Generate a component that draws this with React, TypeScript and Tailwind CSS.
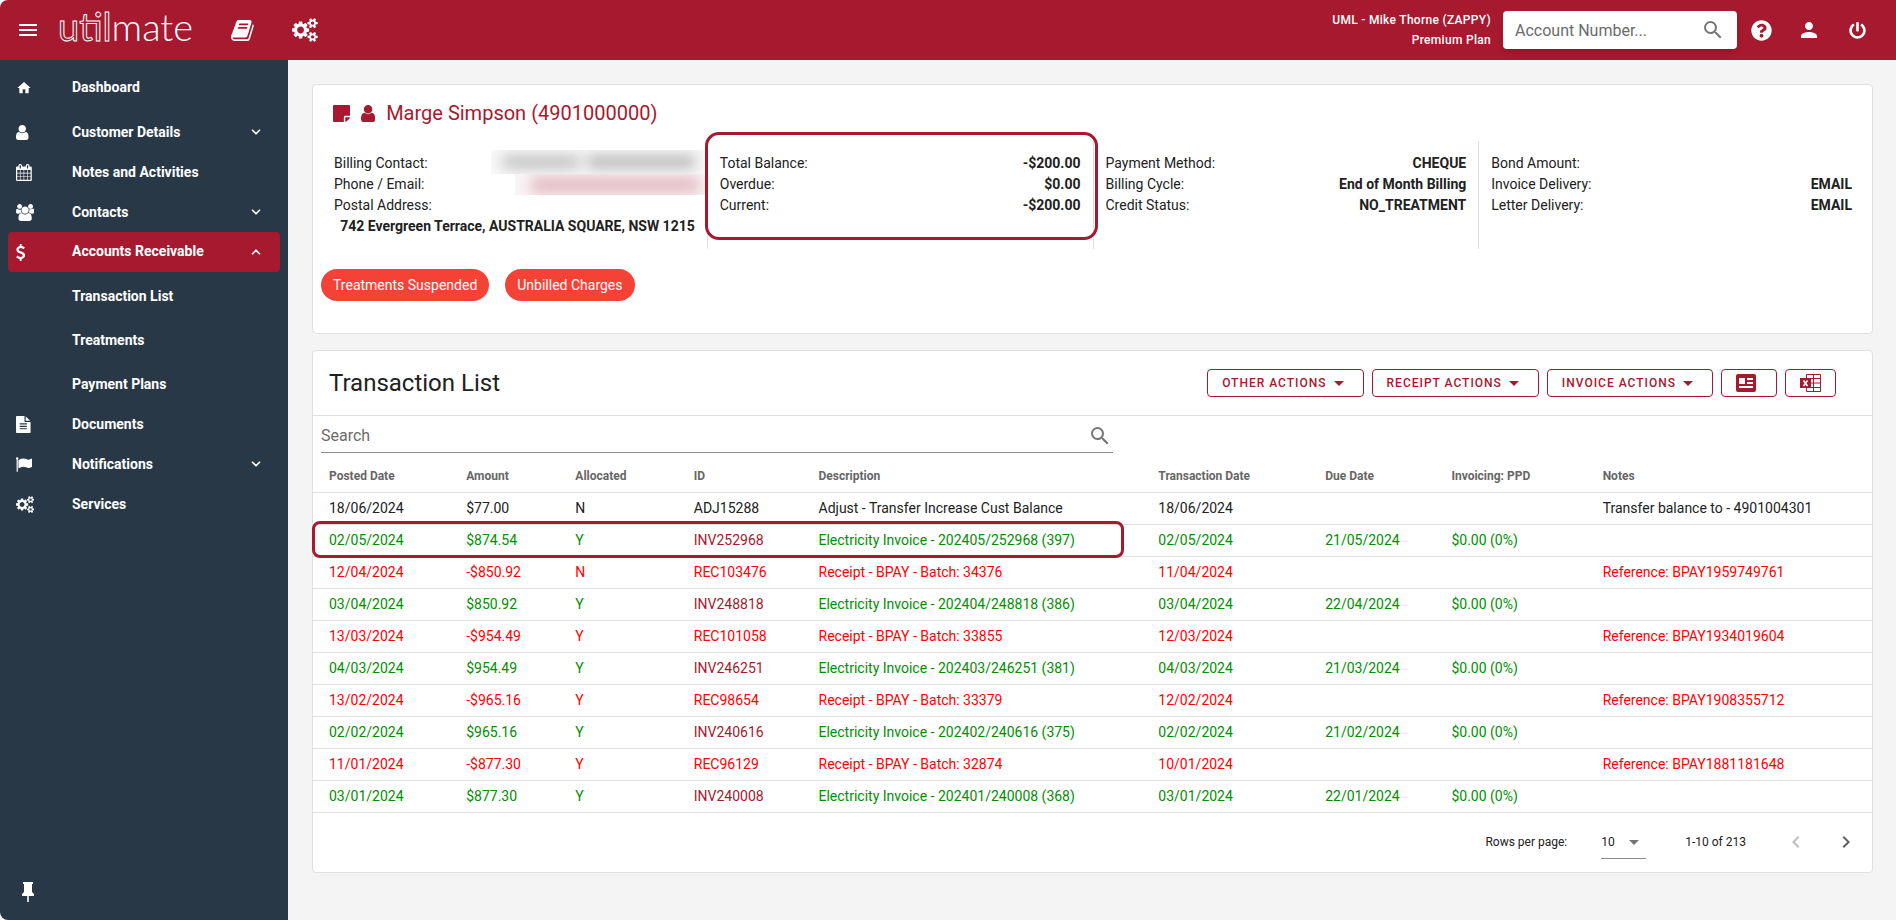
import type { ReactNode } from "react";
import { ChevronDown, ChevronUp } from "lucide-react";
import { FaPowerOff, FaQuestionCircle } from "react-icons/fa";
import { MdArrowDropDown, MdChevronLeft, MdChevronRight, MdHome, MdMenu, MdPerson, MdSearch } from "react-icons/md";

const glyphs = {
  user: {
    box: "256 128 1280 1536",
    d: "M1536 1399q0 109-62.5 187t-150.5 78h-854q-88 0-150.5-78t-62.5-187q0-85 8.5-160.5t31.5-152 58.5-131 94-89 134.5-34.5q131 128 313 128t313-128q76 0 134.5 34.5t94 89 58.5 131 31.5 152 8.5 160.5zm-256-887q0 159-112.5 271.5t-271.5 112.5-271.5-112.5-112.5-271.5 112.5-271.5 271.5-112.5 271.5 112.5 112.5 271.5z",
  },
  calendar: {
    box: "64 0 1664 1792",
    d: "M192 1664h288v-288h-288v288zm352 0h320v-288h-320v288zm-352-352h288v-320h-288v320zm352 0h320v-320h-320v320zm-352-384h288v-288h-288v288zm736 736h320v-288h-320v288zm-384-736h320v-288h-320v288zm768 736h288v-288h-288v288zm-384-352h320v-320h-320v320zm-352-864v-288q0-13-9.5-22.5t-22.5-9.5h-64q-13 0-22.5 9.5t-9.5 22.5v288q0 13 9.5 22.5t22.5 9.5h64q13 0 22.5-9.5t9.5-22.5zm736 864h288v-320h-288v320zm-384-384h320v-288h-320v288zm384 0h288v-288h-288v288zm32-480v-288q0-13-9.5-22.5t-22.5-9.5h-64q-13 0-22.5 9.5t-9.5 22.5v288q0 13 9.5 22.5t22.5 9.5h64q13 0 22.5-9.5t9.5-22.5zm384-64v1280q0 52-38 90t-90 38h-1408q-52 0-90-38t-38-90v-1280q0-52 38-90t90-38h128v-96q0-66 47-113t113-47h64q66 0 113 47t47 113v96h384v-96q0-66 47-113t113-47h64q66 0 113 47t47 113v96h128q52 0 90 38t38 90z",
  },
  users: {
    box: "64 0 1920 1792",
    d: "M657 896q-162 5-265 128h-134q-82 0-138-40.5t-56-118.5q0-353 124-353 6 0 43.5 21t97.5 42.5 119 21.5q67 0 133-23-5 37-5 66 0 159 93 293zm1071 637q0 120-73 189.5t-194 69.5h-874q-121 0-194-69.5t-73-189.5q0-53 3.5-103.5t14-109 26.5-108.5 43-97.5 62-81 85.5-53.5 111.5-20q10 0 43 21.5t73 48 107 48 135 21.5 135-21.5 107-48 73-48 43-21.5q61 0 111.5 20t85.5 53.5 62 81 43 97.5 26.5 108.5 14 109 3.5 103.5zm-1024-1277q0 106-75 181t-181 75-181-75-75-181 75-181 181-75 181 75 75 181zm704 384q0 159-112.5 271.5t-271.5 112.5-271.5-112.5-112.5-271.5 112.5-271.5 271.5-112.5 271.5 112.5 112.5 271.5zm576 225q0 78-56 118.5t-138 40.5h-134q-103-123-265-128 93-134 93-293 0-29-5-66 66 23 133 23 59 0 119-21.5t97.5-42.5 43.5-21q124 0 124 353zm-128-609q0 106-75 181t-181 75-181-75-75-181 75-181 181-75 181 75 75 181z",
  },
  dollar: {
    box: "410 0 960 1792",
    d: "M1362 1185q0 153-99.5 263.5t-258.5 136.5v175q0 14-9 23t-23 9h-135q-13 0-22.5-9.5t-9.5-22.5v-175q-66-9-127.5-31t-101.5-44.5-74-48-46.5-37.5-17.5-18q-17-21-2-41l103-135q7-10 23-12 15-2 24 9l2 2q113 99 243 125 37 8 74 8 81 0 142.5-43t61.5-122q0-28-15-53t-33.5-42-58.5-37.5-66-32-80-32.5q-39-16-61.5-25t-61.5-26.5-62.5-31-56.5-35.5-53.5-42.5-43.5-49-35.5-58-21-66.5-8.5-78q0-138 98-242t255-134v-180q0-13 9.5-22.5t22.5-9.5h135q14 0 23 9t9 23v176q57 6 110.5 23t87 33.5 63.5 37.5 39 29 15 14q17 18 5 38l-81 146q-8 15-23 16-14 3-27-7-3-3-14.5-12t-39-26.5-58.5-32-74.5-26-85.5-11.5q-95 0-155 43t-60 111q0 26 8.5 48t29.5 41.5 39.5 33 56 31 60.5 27 70 27.5q53 20 81 31.5t76 35 75.5 42.5 62 50 53 63.5 31.5 76.5 13 94z",
  },
  file: {
    box: "128 0 1536 1792",
    d: "M1596 476q14 14 28 36h-472v-472q22 14 36 28zm-476 164h544v1056q0 40-28 68t-68 28h-1344q-40 0-68-28t-28-68v-1600q0-40 28-68t68-28h800v544q0 40 28 68t68 28zm160 736v-64q0-14-9-23t-23-9h-704q-14 0-23 9t-9 23v64q0 14 9 23t23 9h704q14 0 23-9t9-23zm0-256v-64q0-14-9-23t-23-9h-704q-14 0-23 9t-9 23v64q0 14 9 23t23 9h704q14 0 23-9t9-23zm0-256v-64q0-14-9-23t-23-9h-704q-14 0-23 9t-9 23v64q0 14 9 23t23 9h704q14 0 23-9t9-23z",
  },
  flag: {
    box: "64 0 1728 1792",
    d: "M320 256q0 72-64 110v1266q0 13-9.5 22.5t-22.5 9.5h-64q-13 0-22.5-9.5t-9.5-22.5v-1266q-64-38-64-110 0-53 37.5-90.5t90.5-37.5 90.5 37.5 37.5 90.5zm1472 64v763q0 25-12.5 38.5t-39.5 27.5q-215 116-369 116-61 0-123.5-22t-108.5-48-115.5-48-142.5-22q-192 0-464 146-17 9-33 9-26 0-45-19t-19-45v-742q0-32 31-55 21-14 79-43 236-120 421-120 107 0 200 29t219 88q38 19 88 19 54 0 117.5-21t110-47 88-47 54.5-21q26 0 45 19t19 45z",
  },
  cogs: {
    box: "0 0 1920 1792",
    d: "M896 896q0-106-75-181t-181-75-181 75-75 181 75 181 181 75 181-75 75-181zm768 512q0-52-38-90t-90-38-90 38-38 90q0 53 37.5 90.5t90.5 37.5 90.5-37.5 37.5-90.5zm0-1024q0-52-38-90t-90-38-90 38-38 90q0 53 37.5 90.5t90.5 37.5 90.5-37.5 37.5-90.5zm-384 421v185q0 10-7 19.5t-16 10.5l-155 24q-11 35-32 76 34 48 90 115 7 11 7 20 0 12-7 19-23 30-82.5 89.5t-78.5 59.5q-11 0-21-7l-115-90q-37 19-77 31-11 108-23 155-7 24-30 24h-186q-11 0-20-7.5t-10-17.5l-23-153q-34-10-75-31l-118 89q-7 7-20 7-11 0-21-8-144-133-144-160 0-9 7-19 10-14 41-53t47-61q-23-44-35-82l-152-24q-10-1-17-9.5t-7-19.5v-185q0-10 7-19.5t16-10.5l155-24q11-35 32-76-34-48-90-115-7-11-7-20 0-12 7-20 22-30 82-89t79-59q11 0 21 7l115 90q34-18 77-32 11-108 23-154 7-24 30-24h186q11 0 20 7.5t10 17.5l23 153q34 10 75 31l118-89q8-7 20-7 11 0 21 8 144 133 144 160 0 8-7 19-12 16-42 54t-45 60q23 48 34 82l152 23q10 2 17 10.5t7 19.5zm640 533v140q0 16-149 31-12 27-30 52 51 113 51 138 0 4-4 7-122 71-124 71-8 0-46-47t-52-68q-20 2-30 2t-30-2q-14 21-52 68t-46 47q-2 0-124-71-4-3-4-7 0-25 51-138-18-25-30-52-149-15-149-31v-140q0-16 149-31 13-29 30-52-51-113-51-138 0-4 4-7 4-2 35-20t59-34 30-16q8 0 46 46.5t52 67.5q20-2 30-2t30 2q51-71 92-112l6-2q4 0 124 70 4 3 4 7 0 25-51 138 17 23 30 52 149 15 149 31zm0-1024v140q0 16-149 31-12 27-30 52 51 113 51 138 0 4-4 7-122 71-124 71-8 0-46-47t-52-68q-20 2-30 2t-30-2q-14 21-52 68t-46 47q-2 0-124-71-4-3-4-7 0-25 51-138-18-25-30-52-149-15-149-31v-140q0-16 149-31 13-29 30-52-51-113-51-138 0-4 4-7 4-2 35-20t59-34 30-16q8 0 46 46.5t52 67.5q20-2 30-2t30 2q51-71 92-112l6-2q4 0 124 70 4 3 4 7 0 25-51 138 17 23 30 52 149 15 149 31z",
  },
  book: {
    box: "64 128 1664 1536",
    d: "M1703 478q40 57 18 129l-275 906q-19 64-76.5 107.5t-122.5 43.5h-923q-77 0-148.5-53.5t-99.5-131.5q-24-67-2-127 0-4 3-27t4-37q1-8-3-21.5t-3-19.5q2-11 8-21t16.5-23.5 16.5-23.5q23-38 45-91.5t30-91.5q3-10 .5-30t-.5-28q3-11 17-28t17-23q21-36 42-92t25-90q1-9-2.5-32t.5-28q4-13 22-30.5t22-22.5q19-26 42.5-84.5t27.5-96.5q1-8-3-25.5t-2-26.5q2-8 9-18t18-23 17-21q8-12 16.5-30.5t15-35 16-36 19.5-32 26.5-23.5 36-11.5 47.5 5.5l-1 3q38-9 51-9h761q74 0 114 56t18 130l-274 906q-36 119-71.5 153.5t-128.5 34.5h-869q-27 0-38 15-11 16-1 43 24 70 144 70h923q29 0 56-15.5t35-41.5l300-987q7-22 5-57 38 15 59 43zm-1064 2q-4 13 2 22.5t20 9.5h608q13 0 25.5-9.5t16.5-22.5l21-64q4-13-2-22.5t-20-9.5h-608q-13 0-25.5 9.5t-16.5 22.5zm-83 256q-4 13 2 22.5t20 9.5h608q13 0 25.5-9.5t16.5-22.5l21-64q4-13-2-22.5t-20-9.5h-608q-13 0-25.5 9.5t-16.5 22.5z",
  },
  note: {
    box: "0 0 18 18",
    d: "M1 0h16q1 0 1 1v10.500h-5q-1.500 0-1.500 1.500v5H1q-1 0-1-1V1q0-1 1-1zM13 13h5q-.2 1-1 1.800l-2.200 2.200q-.800.800-1.800 1z",
  },
  pin: {
    box: "6 2 12 20",
    d: "M16 12V4h1V2H7v2h1v8l-2 2v2h5.200v6h1.600v-6H18v-2z",
  },
};

type GlyphName = keyof typeof glyphs;

function Glyph({ name, className }: { name: GlyphName; className: string }) {
  return (
    <svg viewBox={glyphs[name].box} className={className} fill="currentColor" aria-hidden="true">
      <path d={glyphs[name].d} />
    </svg>
  );
}

function ReportIcon() {
  return (
    <svg viewBox="0 0 20 18" className="h-[18px] w-5" aria-hidden="true">
      <rect width="20" height="18" rx="2" fill="#a6192e" />
      <path d="M3 4h6v6H3zM11 4h6v2h-6zM11 8h6v2h-6zM3 12h14v2H3z" fill="#fff" />
    </svg>
  );
}

function ExcelIcon() {
  return (
    <svg viewBox="0 0 21 18" className="h-[18px] w-[21px]" fill="none" aria-hidden="true">
      <path
        d="M6.500.5h14v17h-14zM6.500 4.500h14M6.500 9h14M6.500 13.500h14M13.500.5v17"
        stroke="#a6192e"
        strokeWidth="1"
      />
      <rect y="4" width="11" height="10" fill="#a6192e" />
      <path d="M3.500 6.500l4 5.500M7.500 6.500l-4 5.500" stroke="#fff" strokeWidth="1.600" />
    </svg>
  );
}

type NavItem = { label: string; icon?: GlyphName; chevron?: boolean };

const navTop: NavItem[] = [
  { label: "Customer Details", icon: "user", chevron: true },
  { label: "Notes and Activities", icon: "calendar" },
  { label: "Contacts", icon: "users", chevron: true },
];
const navReceivable = ["Transaction List", "Treatments", "Payment Plans"];
const navBottom: NavItem[] = [
  { label: "Documents", icon: "file" },
  { label: "Notifications", icon: "flag", chevron: true },
  { label: "Services", icon: "cogs" },
];

function NavLink({ item }: { item: NavItem }) {
  return (
    <a href="#" className="flex h-10 items-center px-2">
      <span className="w-14">
        {item.icon && (
          <Glyph name={item.icon} className={item.icon === "user" ? "h-[15px] w-auto" : "h-[17px] w-auto"} />
        )}
      </span>
      <span className="flex-1 pb-px">{item.label}</span>
      {item.chevron && <ChevronDown className="mr-[9px] size-[14px]" strokeWidth={3} />}
    </a>
  );
}

function Sidebar() {
  return (
    <nav className="flex w-72 shrink-0 flex-col bg-[#293846] px-2 pt-2 text-sm font-bold text-white">
      <a href="#" className="mb-1 flex h-10 items-center px-2">
        <span className="w-14">
          <MdHome className="size-4" />
        </span>
        <span className="pb-0.5">Dashboard</span>
      </a>
      {navTop.map((item) => (
        <NavLink key={item.label} item={item} />
      ))}
      <button className="flex h-10 items-center rounded bg-[#a6192e] px-2 text-left">
        <span className="w-14">
          <Glyph name="dollar" className="h-[17px] w-auto" />
        </span>
        <span className="flex-1 pb-0.5">Accounts Receivable</span>
        <ChevronUp className="mr-[9px] size-[14px]" strokeWidth={3} />
      </button>
      <div className="mt-1 flex flex-col gap-1">
        {navReceivable.map((label) => (
          <NavLink key={label} item={{ label }} />
        ))}
      </div>
      {navBottom.map((item) => (
        <NavLink key={item.label} item={item} />
      ))}
      <button className="mt-auto mb-[18px] ml-[14px] self-start" aria-label="Pin menu">
        <Glyph name="pin" className="h-5 w-3" />
      </button>
    </nav>
  );
}

function TopBar() {
  return (
    <header className="flex h-[60px] items-center bg-[#a6192e] pr-[30px] pl-4 text-white">
      <button aria-label="Menu">
        <MdMenu className="size-6" />
      </button>
      <a href="#" className="ml-[18px] flex pb-2 font-['Lato',sans-serif] text-[38px] leading-none">
        <span className="text-transparent [-webkit-text-stroke:1px_#fff]">util</span>
        <span className="font-light">mate</span>
      </a>
      <a href="#" className="ml-[38px]" aria-label="Library">
        <Glyph name="book" className="h-[21px] w-auto" />
      </a>
      <a href="#" className="ml-[38px]" aria-label="Settings">
        <Glyph name="cogs" className="h-6 w-auto" />
      </a>
      <div className="ml-auto text-right text-xs leading-5 font-medium tracking-wide">
        <p>UML - Mike Thorne (ZAPPY)</p>
        <p>Premium Plan</p>
      </div>
      <label className="ml-3 flex h-[38px] w-[234px] items-center rounded bg-white px-3 shadow-md">
        <input
          aria-label="Account Number"
          placeholder="Account Number..."
          className="min-w-0 flex-1 pt-0.5 text-base text-black outline-none placeholder:text-[#6b6b6b]"
        />
        <MdSearch className="size-6 text-[#757575]" />
      </label>
      <button className="ml-[14px]" aria-label="Help">
        <FaQuestionCircle className="size-[21px]" />
      </button>
      <button className="ml-[25px]" aria-label="Profile">
        <MdPerson className="size-6" />
      </button>
      <button className="ml-7" aria-label="Log out">
        <FaPowerOff className="size-[17px]" />
      </button>
    </header>
  );
}

function InfoColumn({ children, last }: { children: ReactNode; last?: boolean }) {
  return (
    <div
      className={`relative h-[108px] min-w-0 flex-1 px-3 py-3 leading-[21px] ${last ? "" : "border-r border-[#e0e0e0]"}`}
    >
      {children}
    </div>
  );
}

function InfoRow({ label, value }: { label: string; value?: string }) {
  return (
    <div className="flex justify-between">
      <span>{label}</span>
      <span className="font-bold">{value}</span>
    </div>
  );
}

function CustomerCard() {
  return (
    <section className="h-[250px] rounded border border-[#e0e0e0] bg-white px-2 pt-3 text-sm text-[#212121]">
      <h1 className="flex h-8 items-center pl-3 text-xl text-[#a6192e]">
        <Glyph name="note" className="size-[17px]" />
        <Glyph name="user" className="ml-[11px] h-[17px] w-auto" />
        <span className="ml-[11px]">Marge Simpson (4901000000)</span>
      </h1>
      <div className="mt-3 flex pl-px">
        <InfoColumn>
          <div className="flex h-[21px] justify-between">
            <span>Billing Contact:</span>
            <span className="-mt-[3px] -mr-3 flex h-6 w-[216px] items-center gap-2 overflow-hidden bg-[#f8f8f8] pr-3 pl-3">
              <span className="h-3 w-[76px] bg-neutral-400/70 blur-[7px]" />
              <span className="h-3 flex-1 bg-neutral-400/80 blur-[7px]" />
            </span>
          </div>
          <div className="flex justify-between">
            <span>Phone / Email:</span>
            <span className="-mr-3 flex h-[21px] w-[192px] items-center overflow-hidden bg-[#f8f4f5] pr-2 pl-4">
              <span className="h-4 flex-1 bg-[#dc9fac]/70 blur-[7px]" />
            </span>
          </div>
          <p>Postal Address:</p>
          <p className="text-right font-bold whitespace-nowrap">742 Evergreen Terrace, AUSTRALIA SQUARE, NSW 1215</p>
        </InfoColumn>
        <InfoColumn>
          <InfoRow label="Total Balance:" value="-$200.00" />
          <InfoRow label="Overdue:" value="$0.00" />
          <InfoRow label="Current:" value="-$200.00" />
          <div className="absolute -top-[9px] -right-[5px] bottom-[9px] -left-[3px] rounded-[14px] border-3 border-[#a6192e]" />
        </InfoColumn>
        <InfoColumn>
          <InfoRow label="Payment Method:" value="CHEQUE" />
          <InfoRow label="Billing Cycle:" value="End of Month Billing" />
          <InfoRow label="Credit Status:" value="NO_TREATMENT" />
        </InfoColumn>
        <InfoColumn last>
          <InfoRow label="Bond Amount:" />
          <InfoRow label="Invoice Delivery:" value="EMAIL" />
          <InfoRow label="Letter Delivery:" value="EMAIL" />
        </InfoColumn>
      </div>
      <div className="mt-5 flex gap-4 text-white">
        <span className="flex h-8 items-center rounded-full bg-[#f44336] px-3">Treatments Suspended</span>
        <span className="flex h-8 items-center rounded-full bg-[#f44336] px-3">Unbilled Charges</span>
      </div>
    </section>
  );
}

const columns = [
  { title: "Posted Date", width: "w-[8.8%]" },
  { title: "Amount", width: "w-[7%]" },
  { title: "Allocated", width: "w-[7.6%]" },
  { title: "ID", width: "w-[8%]" },
  { title: "Description", width: "w-[21.8%]" },
  { title: "Transaction Date", width: "w-[10.7%]" },
  { title: "Due Date", width: "w-[8.1%]" },
  { title: "Invoicing: PPD", width: "w-[9.7%]" },
  { title: "Notes", width: "" },
];

const rows = [
  ["18/06/2024", "$77.00", "N", "ADJ15288", "Adjust - Transfer Increase Cust Balance", "18/06/2024", "", "", "Transfer balance to - 4901004301"],
  ["02/05/2024", "$874.54", "Y", "INV252968", "Electricity Invoice - 202405/252968 (397)", "02/05/2024", "21/05/2024", "$0.00 (0%)", ""],
  ["12/04/2024", "-$850.92", "N", "REC103476", "Receipt - BPAY - Batch: 34376", "11/04/2024", "", "", "Reference: BPAY1959749761"],
  ["03/04/2024", "$850.92", "Y", "INV248818", "Electricity Invoice - 202404/248818 (386)", "03/04/2024", "22/04/2024", "$0.00 (0%)", ""],
  ["13/03/2024", "-$954.49", "Y", "REC101058", "Receipt - BPAY - Batch: 33855", "12/03/2024", "", "", "Reference: BPAY1934019604"],
  ["04/03/2024", "$954.49", "Y", "INV246251", "Electricity Invoice - 202403/246251 (381)", "04/03/2024", "21/03/2024", "$0.00 (0%)", ""],
  ["13/02/2024", "-$965.16", "Y", "REC98654", "Receipt - BPAY - Batch: 33379", "12/02/2024", "", "", "Reference: BPAY1908355712"],
  ["02/02/2024", "$965.16", "Y", "INV240616", "Electricity Invoice - 202402/240616 (375)", "02/02/2024", "21/02/2024", "$0.00 (0%)", ""],
  ["11/01/2024", "-$877.30", "Y", "REC96129", "Receipt - BPAY - Batch: 32874", "10/01/2024", "", "", "Reference: BPAY1881181648"],
  ["03/01/2024", "$877.30", "Y", "INV240008", "Electricity Invoice - 202401/240008 (368)", "03/01/2024", "22/01/2024", "$0.00 (0%)", ""],
];

function rowColor(id: string) {
  if (id.startsWith("INV")) return "text-[#009000]";
  if (id.startsWith("REC")) return "text-[#ff0000]";
  return "text-[#212121]";
}

function TransactionTable() {
  return (
    <table className="w-full table-fixed border-collapse text-left text-sm">
      <thead>
        <tr className="h-[39px] border-b border-[#e0e0e0] text-xs text-[#666666]">
          {columns.map((column) => (
            <th key={column.title} className={`px-4 pt-2 font-bold ${column.width}`}>
              {column.title}
            </th>
          ))}
        </tr>
      </thead>
      <tbody>
        {rows.map((row, index) => (
          <tr key={row[3]} className={`relative h-8 border-b border-[#e0e0e0] whitespace-nowrap ${rowColor(row[3])}`}>
            {row.map((cell, i) => (
              <td key={columns[i].title} className="px-4">
                {i === 3 && cell.startsWith("INV") ? (
                  <a href="#" className="text-[#a6192e]">
                    {cell}
                  </a>
                ) : (
                  cell
                )}
                {index === 1 && i === 0 && (
                  <span className="absolute -top-[3px] -bottom-[3px] -left-px w-[52.1%] rounded-lg border-3 border-[#a6192e]" />
                )}
              </td>
            ))}
          </tr>
        ))}
      </tbody>
    </table>
  );
}

function ActionButton({ label }: { label: string }) {
  return (
    <button className="flex h-7 items-center rounded border border-[#a6192e] pr-3 pl-[14px] text-xs font-medium tracking-[1px] uppercase">
      {label}
      <MdArrowDropDown className="size-6" />
    </button>
  );
}

function TransactionCard() {
  return (
    <section className="mt-4 rounded border border-[#e0e0e0] bg-white text-[#212121]">
      <div className="flex h-[65px] items-center gap-2 border-b border-[#e0e0e0] pr-9 pl-4 text-[#a6192e]">
        <h2 className="mr-auto text-2xl text-[#212121]">Transaction List</h2>
        <ActionButton label="Other Actions" />
        <ActionButton label="Receipt Actions" />
        <ActionButton label="Invoice Actions" />
        <button className="flex h-7 w-14 items-center rounded border border-[#a6192e] pl-[14px]" aria-label="Report">
          <ReportIcon />
        </button>
        <button className="flex h-7 w-[51px] items-center rounded border border-[#a6192e] pl-[14px]" aria-label="Export to Excel">
          <ExcelIcon />
        </button>
      </div>
      <label className="ml-2 flex h-[37px] w-[calc(50%+12px)] items-center border-b border-[#8c8c8c] pt-1 pr-px">
        <input
          aria-label="Search"
          placeholder="Search"
          className="min-w-0 flex-1 text-base outline-none placeholder:text-[#6b6b6b]"
        />
        <MdSearch className="size-6 text-[#757575]" />
      </label>
      <TransactionTable />
      <div className="flex h-[59px] items-center pr-[6px] text-xs">
        <label htmlFor="page-size" className="ml-auto">
          Rows per page:
        </label>
        <div className="relative ml-[34px] w-[45px] border-b border-[#8c8c8c]">
          <select id="page-size" defaultValue="10" className="h-8 w-full appearance-none outline-none">
            <option>10</option>
            <option>25</option>
            <option>50</option>
          </select>
          <MdArrowDropDown className="pointer-events-none absolute top-1 right-0 size-6 text-[#757575]" />
        </div>
        <span className="ml-[39px]">1-10 of 213</span>
        <button className="ml-[38px] text-[#bdbdbd]" aria-label="Previous page" disabled>
          <MdChevronLeft className="size-6" />
        </button>
        <button className="mr-2 ml-[26px] text-[#616161]" aria-label="Next page">
          <MdChevronRight className="size-6" />
        </button>
      </div>
    </section>
  );
}

export default function App() {
  return (
    <div className="flex min-h-screen flex-col overflow-hidden rounded-l-lg bg-[#f4f4f4] font-['Roboto',sans-serif]">
      <TopBar />
      <div className="flex flex-1">
        <Sidebar />
        <main className="min-w-0 flex-1 pt-6 pr-[23px] pl-6">
          <CustomerCard />
          <TransactionCard />
        </main>
      </div>
    </div>
  );
}
